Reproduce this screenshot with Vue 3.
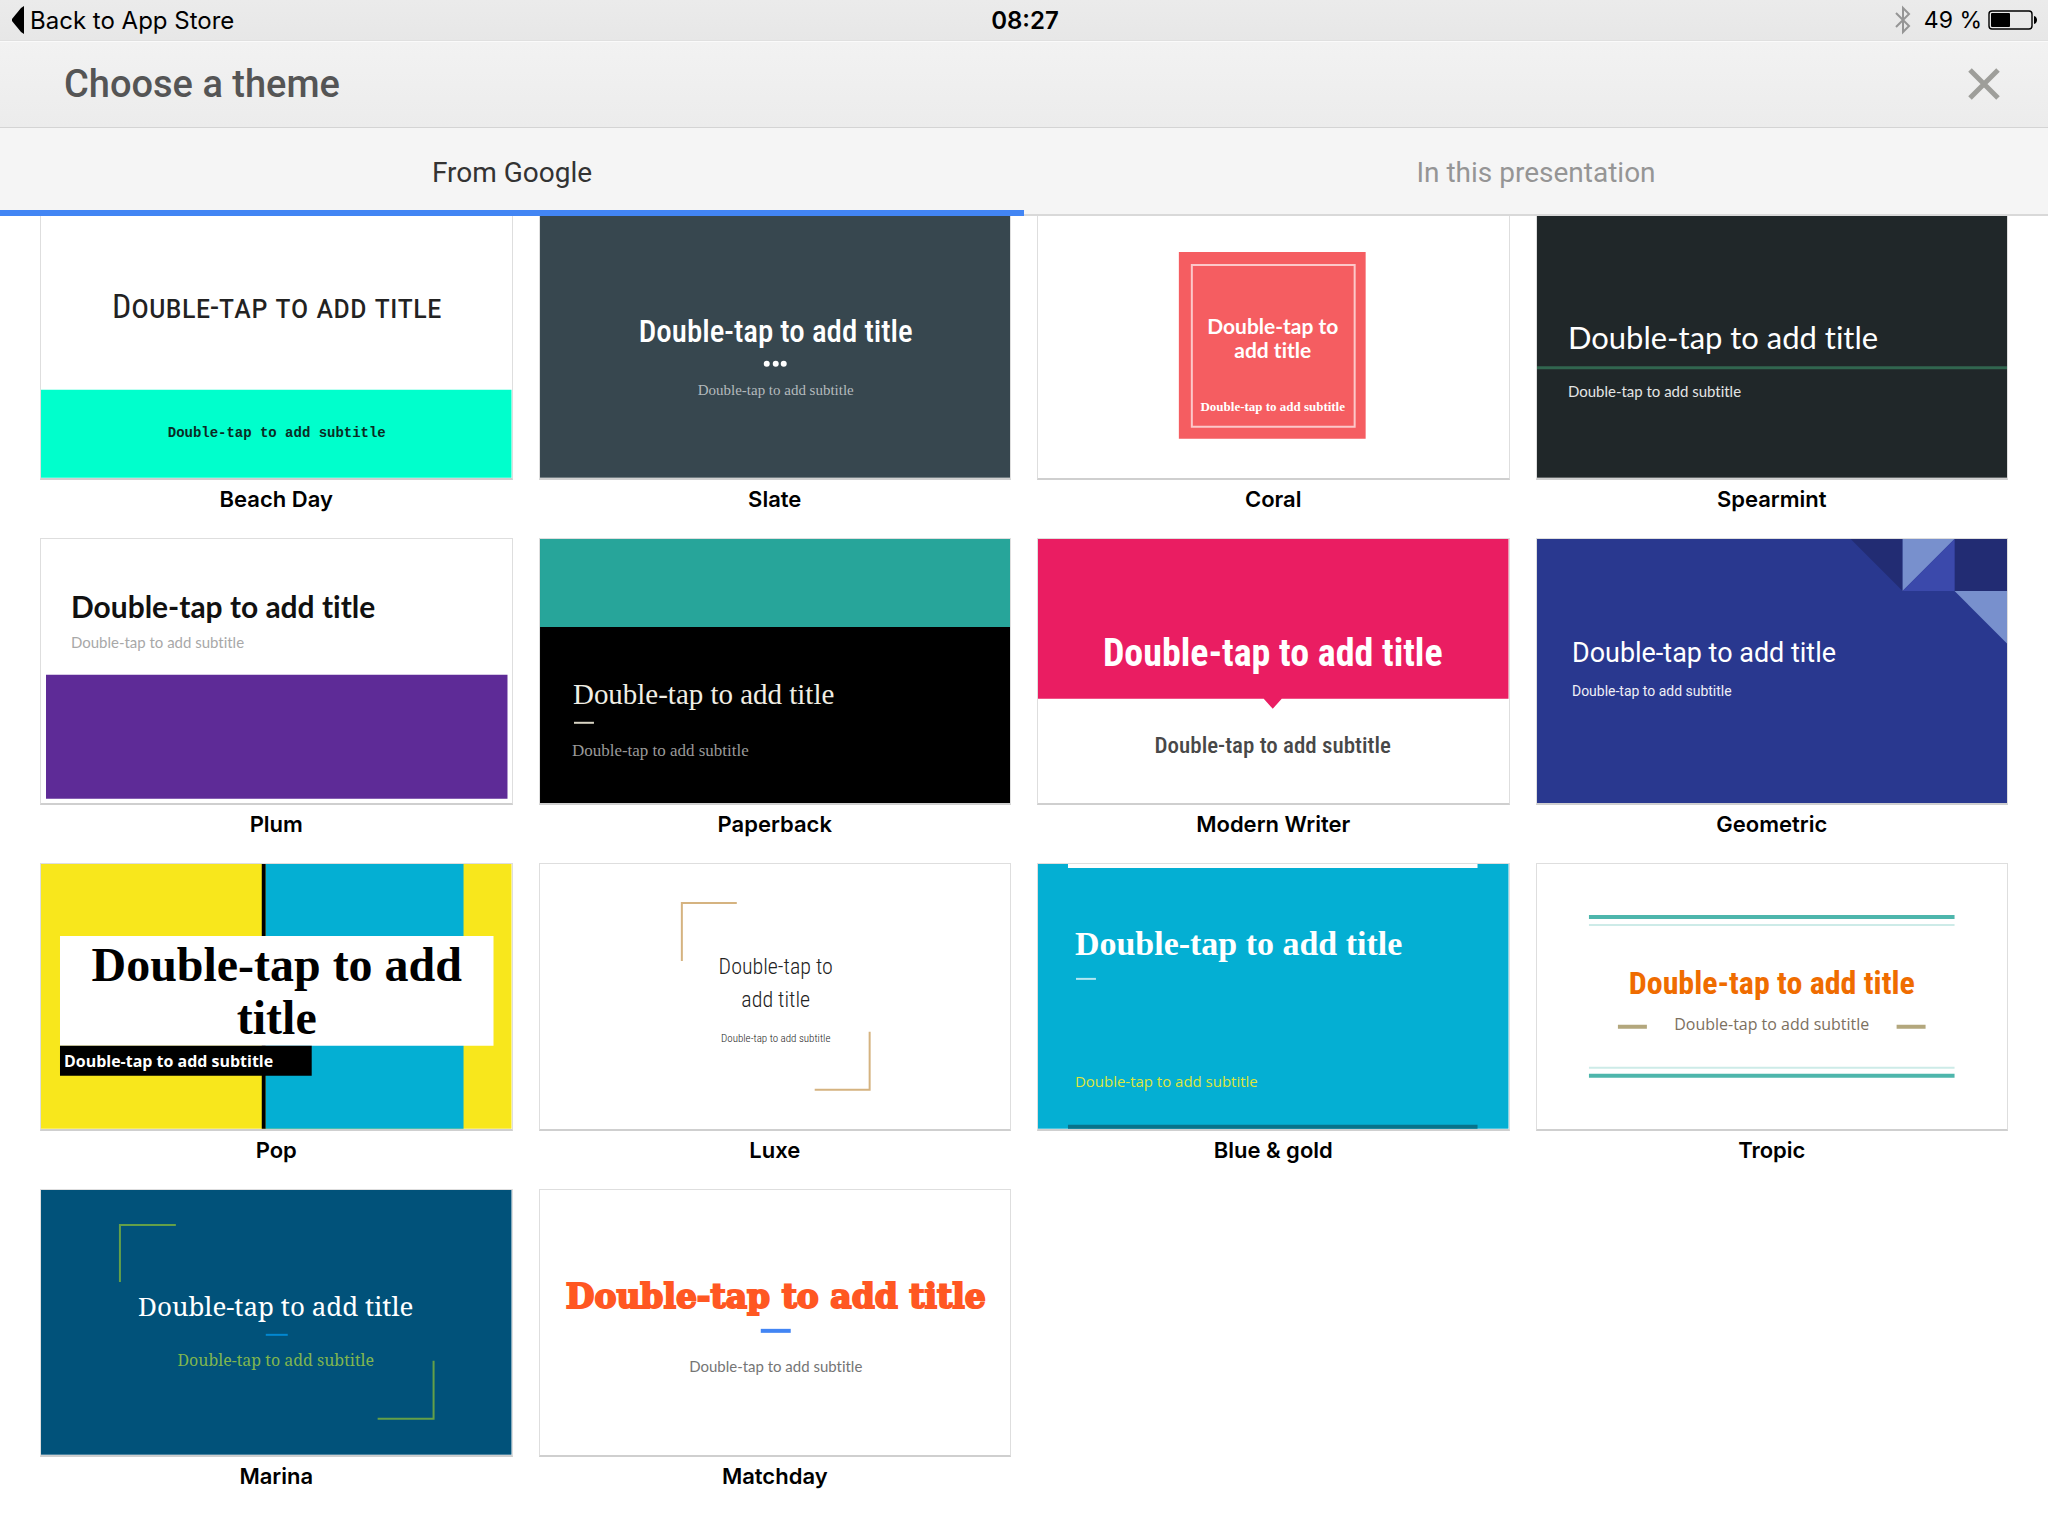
<script setup>
import { ref } from 'vue'

const emit = defineEmits(['theme-picked', 'close'])
const tabs = ['From Google', 'In this presentation']
const activeTab = ref(0)

const TITLE = 'Double-tap to add title'
const SUBTITLE = 'Double-tap to add subtitle'

// every slide is drawn on a 471 x 265 canvas
const themes = ref([
    {
        name: 'Beach Day',
        bg: '#ffffff',
        shapes: [{ d: 'M0 177H471V265H0z', fill: '#00ffcc' }],
        texts: [
            { text: TITLE, x: 236, y: 105, size: 34, font: 'hand', fill: '#222222', center: true },
            { text: SUBTITLE, x: 236, y: 224, size: 14, font: 'mono', fill: '#0b2b24', center: true }
        ]
    },
    {
        name: 'Slate',
        bg: '#37474f',
        shapes: [{ d: 'M227 151h0M236 151h0M244 151h0', stroke: '#ffffff', width: 6, round: true }],
        texts: [
            { text: TITLE, x: 236, y: 129, size: 31, font: 'condensed', fill: '#ffffff', center: true },
            { text: SUBTITLE, x: 236, y: 182, size: 15, font: 'serif', fill: '#b4babd', center: true }
        ]
    },
    {
        name: 'Coral',
        bg: '#ffffff',
        shapes: [
            { d: 'M141 39H328V226H141z', fill: '#f55d61' },
            { d: 'M154 52H317V214H154z', stroke: '#fcc8c9', width: 2 }
        ],
        texts: [
            { text: 'Double-tap to', x: 235, y: 121, size: 21, font: 'lato-bold', fill: '#ffffff', center: true },
            { text: 'add title', x: 235, y: 145, size: 21, font: 'lato-bold', fill: '#ffffff', center: true },
            { text: SUBTITLE, x: 235, y: 198, size: 13, font: 'serif-bold', fill: '#ffffff', center: true }
        ]
    },
    {
        name: 'Spearmint',
        bg: '#202729',
        shapes: [{ d: 'M0 155H471', stroke: '#31664f', width: 3 }],
        texts: [
            { text: TITLE, x: 31, y: 136, size: 31, font: 'lato', fill: '#ffffff' },
            { text: SUBTITLE, x: 31, y: 184, size: 15, font: 'lato', fill: '#e4e5e5' }
        ]
    },
    {
        name: 'Plum',
        bg: '#ffffff',
        shapes: [{ d: 'M5 136H467V260H5z', fill: '#5e2b97' }],
        texts: [
            { text: TITLE, x: 30, y: 79, size: 30, font: 'lato-bold', fill: '#111111' },
            { text: SUBTITLE, x: 30, y: 109, size: 15, font: 'lato', fill: '#a8a8a8' }
        ]
    },
    {
        name: 'Paperback',
        bg: '#000000',
        shapes: [
            { d: 'M0 0H471V88H0z', fill: '#27a59a' },
            { d: 'M34 184H54', stroke: '#d8d4c4', width: 2 }
        ],
        texts: [
            { text: TITLE, x: 33, y: 165, size: 29, font: 'serif', fill: '#f0eee4' },
            { text: SUBTITLE, x: 32, y: 217, size: 17, font: 'serif', fill: '#999999' }
        ]
    },
    {
        name: 'Modern Writer',
        bg: '#ffffff',
        shapes: [{ d: 'M0 0H471V160H244L235 170L226 160H0z', fill: '#ea1d62' }],
        texts: [
            { text: TITLE, x: 235, y: 127, size: 38, font: 'condensed-bold', fill: '#ffffff', center: true },
            { text: SUBTITLE, x: 235, y: 214, size: 23, font: 'condensed', fill: '#484848', center: true }
        ]
    },
    {
        name: 'Geometric',
        bg: '#29388f',
        shapes: [
            { d: 'M314 0H366V52z', fill: '#222c73' },
            { d: 'M418 0H471V52H418z', fill: '#222c73' },
            { d: 'M366 0H418L366 52z', fill: '#7890cd' },
            { d: 'M418 0V52H366z', fill: '#3b49ab' },
            { d: 'M418 52H471V105z', fill: '#7890cd' }
        ],
        texts: [
            { text: TITLE, x: 35, y: 123, size: 27, font: 'roboto', fill: '#ffffff' },
            { text: SUBTITLE, x: 35, y: 157, size: 14, font: 'roboto', fill: '#eeeff6' }
        ]
    },
    {
        name: 'Pop',
        bg: '#f8e71c',
        shapes: [
            { d: 'M221 0H225V265H221z', fill: '#000000' },
            { d: 'M225 0H423V265H225z', fill: '#04afd3' },
            { d: 'M19 72H453V182H19z', fill: '#ffffff' },
            { d: 'M19 182H271V212H19z', fill: '#000000' }
        ],
        texts: [
            { text: 'Double-tap to add', x: 236, y: 117, size: 48, font: 'serif-bold', fill: '#000000', center: true },
            { text: 'title', x: 236, y: 170, size: 48, font: 'serif-bold', fill: '#000000', center: true },
            { text: SUBTITLE, x: 23, y: 203, size: 16, font: 'open-bold', fill: '#ffffff' }
        ]
    },
    {
        name: 'Luxe',
        bg: '#ffffff',
        shapes: [{ d: 'M197 39H142V97M275 226H330V168', stroke: '#d5b380', width: 2 }],
        texts: [
            { text: 'Double-tap to', x: 236, y: 110, size: 22, font: 'condensed-light', fill: '#222222', center: true },
            { text: 'add title', x: 236, y: 143, size: 22, font: 'condensed-light', fill: '#222222', center: true },
            { text: SUBTITLE, x: 236, y: 178, size: 11, font: 'condensed-light', fill: '#222222', center: true }
        ]
    },
    {
        name: 'Blue & gold',
        bg: '#04afd3',
        shapes: [
            { d: 'M30 0H440V4H30z', fill: '#ffffff' },
            { d: 'M30 261H440V265H30z', fill: '#08728a' },
            { d: 'M38 115H58', stroke: '#b4e7f2', width: 2 }
        ],
        texts: [
            { text: TITLE, x: 37, y: 91, size: 34, font: 'serif-bold', fill: '#ffffff' },
            { text: SUBTITLE, x: 37, y: 223, size: 15, font: 'open', fill: '#dfe63c' }
        ]
    },
    {
        name: 'Tropic',
        bg: '#ffffff',
        shapes: [
            { d: 'M52 53H418M52 212H418', stroke: '#4db6ac', width: 4 },
            { d: 'M52 61H418M52 204H418', stroke: '#cdebe8', width: 2 },
            { d: 'M81 163H110M360 163H389', stroke: '#b3a77d', width: 4 }
        ],
        texts: [
            { text: TITLE, x: 235, y: 130, size: 32, font: 'condensed-bold', fill: '#ef6c00', center: true },
            { text: SUBTITLE, x: 235, y: 166, size: 16, font: 'open', fill: '#7c7060', center: true }
        ]
    },
    {
        name: 'Marina',
        bg: '#01527a',
        shapes: [
            { d: 'M135 35H79V92M337 229H393V171', stroke: '#64a048', width: 2 },
            { d: 'M225 145H247', stroke: '#0288d1', width: 2 }
        ],
        texts: [
            { text: TITLE, x: 235, y: 126, size: 26, font: 'slab', fill: '#ffffff', center: true },
            { text: SUBTITLE, x: 235, y: 176, size: 16, font: 'slab', fill: '#80b64f', center: true }
        ]
    },
    {
        name: 'Matchday',
        bg: '#ffffff',
        shapes: [{ d: 'M221 141H251', stroke: '#4285f4', width: 4 }],
        texts: [
            { text: TITLE, x: 236, y: 118, size: 33, font: 'slab-heavy', fill: '#ff5722', center: true },
            { text: SUBTITLE, x: 236, y: 182, size: 15, font: 'lato', fill: '#757575', center: true }
        ]
    }
])

const pickTheme = (theme) => {
    emit('theme-picked', theme.name)
}
</script>

<template>
    <div class="picker">
        <header class="top">
            <div class="status">
                <a class="back" href="#">
                    <svg width="12" height="28" viewBox="0 0 12 28" aria-hidden="true">
                        <path d="M12 0V28L9 26L0 15V13L9 2z" fill="#000" />
                    </svg>
                    Back to App Store
                </a>
                <span class="clock">08:27</span>
                <div class="power">
                    <svg class="bluetooth" width="18" height="30" viewBox="0 0 18 30" aria-hidden="true">
                        <path d="M2 8L15 21L9 27V3L15 9L2 22" fill="none" stroke="#959595" stroke-width="2" />
                    </svg>
                    <span>49 %</span>
                    <svg width="50" height="20" viewBox="0 0 50 20" aria-hidden="true">
                        <rect x="1" y="1" width="43" height="18" rx="3" fill="none" stroke="#000" stroke-width="1.4" />
                        <rect x="3" y="3" width="19" height="14" rx="1" fill="#000" />
                        <path d="M46 6C50 7 50 13 46 14z" fill="#000" />
                    </svg>
                </div>
            </div>
            <div class="heading">
                <h1>Choose a theme</h1>
                <button class="close" type="button" aria-label="Close" @click="emit('close')">
                    <svg width="34" height="34" viewBox="0 0 34 34" aria-hidden="true">
                        <path d="M3 3L31 31M31 3L3 31" stroke="#9e9e9a" stroke-width="5" />
                    </svg>
                </button>
            </div>
            <nav class="tabs" role="tablist">
                <button
                    v-for="(tab, i) in tabs"
                    :key="tab"
                    type="button"
                    role="tab"
                    :aria-selected="activeTab === i"
                    :class="['tab', { active: activeTab === i }]"
                    @click="activeTab = i"
                >{{ tab }}</button>
            </nav>
        </header>

        <main class="themes">
            <button v-for="theme in themes" :key="theme.name" class="theme" type="button" @click="pickTheme(theme)">
                <svg class="slide" viewBox="0 0 471 265">
                    <rect width="471" height="265" :fill="theme.bg" />
                    <path
                        v-for="(s, i) in theme.shapes"
                        :key="i"
                        :d="s.d"
                        :fill="s.fill || 'none'"
                        :stroke="s.stroke"
                        :stroke-width="s.width"
                        :stroke-linecap="s.round ? 'round' : 'butt'"
                    />
                    <text
                        v-for="(t, i) in theme.texts"
                        :key="'t' + i"
                        :class="t.font"
                        :x="t.x"
                        :y="t.y"
                        :font-size="t.size"
                        :fill="t.fill"
                        :text-anchor="t.center ? 'middle' : 'start'"
                    >{{ t.text }}</text>
                </svg>
                <span class="name">{{ theme.name }}</span>
            </button>
        </main>
    </div>
</template>

<style>
body {
    margin: 0;
    background: #ffffff;
}
</style>

<style scoped>
.picker {
    font-family: Inter, "Liberation Sans", sans-serif;
    color: #000000;
}

button {
    padding: 0;
    border: 0;
    background: none;
    font: inherit;
    color: inherit;
    cursor: pointer;
}

.top {
    position: sticky;
    top: 0;
    z-index: 1;
}

.status {
    display: grid;
    grid-template-columns: 1fr auto 1fr;
    align-items: center;
    height: 40px;
    padding: 0 10px 0 12px;
    border-bottom: 1px solid #e0e0e0;
    background: linear-gradient(#ebebeb, #e7e7e7);
    font-size: 24px;
}

.back {
    display: flex;
    align-items: center;
    gap: 6px;
    color: #000000;
    text-decoration: none;
}

.clock {
    font-weight: 600;
}

.power {
    display: flex;
    align-items: center;
    justify-content: flex-end;
    gap: 6px;
    font-size: 23px;
}

.bluetooth {
    margin-right: 6px;
}

.heading {
    display: flex;
    align-items: center;
    justify-content: space-between;
    box-sizing: border-box;
    height: 87px;
    padding: 0 47px 2px 64px;
    border-top: 1px solid #fafafa;
    border-bottom: 1px solid #d4d4d4;
    background: linear-gradient(#f2f2f2, #ececec);
    font-family: Roboto, sans-serif;
}

h1 {
    margin: 0;
    font-size: 38px;
    font-weight: 500;
    color: #555555;
}

.close {
    display: flex;
}

.tabs {
    display: flex;
    height: 88px;
    background: #f5f5f5;
}

.tab {
    flex: 1;
    box-shadow: inset 0 -2px #d9d9d9;
    font-family: Roboto, sans-serif;
    font-size: 28px;
    color: #959595;
}

.tab.active {
    box-shadow: inset 0 -6px #4285f4;
    color: #333333;
}

/* the list is scrolled a little, so the first row slips under the tabs */
.themes {
    display: grid;
    grid-template-columns: repeat(4, 1fr);
    gap: 20px 26px;
    margin-top: -4px;
    padding: 0 40px 20px;
}

.theme {
    display: flex;
    flex-direction: column;
}

.slide {
    display: block;
    box-sizing: border-box;
    width: 100%;
    border: 1px solid #dedede;
    border-bottom: 2px solid #cfcfcf;
    font-variant-ligatures: none;
}

.name {
    align-self: center;
    height: 38px;
    font-size: 22px;
    font-weight: 600;
    line-height: 38px;
}

.hand {
    font-family: "Roboto Condensed", sans-serif;
    font-variant-caps: small-caps;
}

.mono {
    font-family: "Liberation Mono", monospace;
    font-weight: 700;
}

.condensed-light {
    font-family: "Roboto Condensed", sans-serif;
    font-weight: 300;
}

.condensed {
    font-family: "Roboto Condensed", sans-serif;
    font-weight: 500;
}

.condensed-bold {
    font-family: "Roboto Condensed", sans-serif;
    font-weight: 700;
}

.serif {
    font-family: "Liberation Serif", serif;
}

.serif-bold {
    font-family: "Liberation Serif", serif;
    font-weight: 700;
}

.lato {
    font-family: Lato, sans-serif;
}

.lato-bold {
    font-family: Lato, sans-serif;
    font-weight: 700;
}

.roboto {
    font-family: Roboto, sans-serif;
}

.open {
    font-family: "Open Sans", sans-serif;
}

.open-bold {
    font-family: "Open Sans", sans-serif;
    font-weight: 700;
}

.slab {
    font-family: "Noto Serif", serif;
}

.slab-heavy {
    font-family: "DejaVu Serif", serif;
    font-weight: 700;
    stroke: #ff5722;
    stroke-width: 2px;
}
</style>
